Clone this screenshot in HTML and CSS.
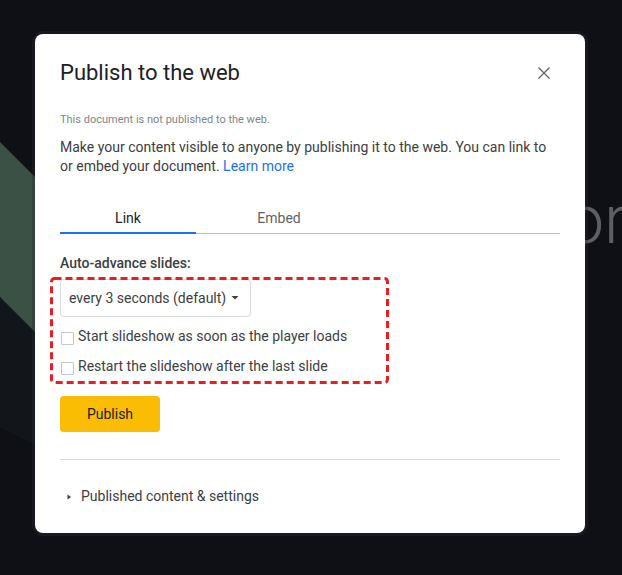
FILE: index.html
```html
<!DOCTYPE html>
<html lang="en">
<head>
<meta charset="utf-8">
<title>Publish to the web</title>
<link rel="stylesheet" href="styles.css">
</head>
<body>
<div class="backdrop">
  <div class="deco-green"></div>
  <div class="deco-dark"></div>
  <div class="deco-text">or</div>
  <div class="dialog">
    <div class="header">
      <h1 class="title">Publish to the web</h1>
      <svg class="close" width="24" height="24" viewBox="0 0 24 24" aria-label="Close">
        <path d="M6.5 6.5 L17.5 17.5 M17.5 6.5 L6.5 17.5" stroke="#5f6368" stroke-width="1.3" fill="none"/>
      </svg>
    </div>
    <p class="status">This document is not published to the web.</p>
    <p class="desc">Make your content visible to anyone by publishing it to the web. You can link to or embed your document. <a class="link" href="#">Learn more</a></p>
    <div class="tabs">
      <div class="tab tab-active">Link</div>
      <div class="tab tab-embed">Embed</div>
    </div>
    <div class="label">Auto-advance slides:</div>
    <div class="select">
      <span>every 3 seconds (default)</span>
      <svg class="caret" width="8" height="4" viewBox="0 0 8 4"><path d="M0.5 0 L7.5 0 L4 3.6 Z" fill="#3c4043"/></svg>
    </div>
    <label class="check"><span class="box"></span><span>Start slideshow as soon as the player loads</span></label>
    <label class="check check-second"><span class="box"></span><span>Restart the slideshow after the last slide</span></label>
    <button class="publish">Publish</button>
    <div class="divider"></div>
    <div class="expander">
      <svg class="tri" width="5" height="6" viewBox="0 0 5 6"><path d="M0.5 0.5 L4 3 L0.5 5.5 Z" fill="#3c4043"/></svg>
      <span>Published content &amp; settings</span>
    </div>
    <svg class="annot" width="339" height="107" viewBox="0 0 339 107">
      <rect x="1.5" y="1.5" width="336" height="104" rx="3" ry="3" fill="none" stroke="#ec1c24" stroke-width="3" stroke-dasharray="7 4"/>
    </svg>
  </div>
</div>
</body>
</html>
```

FILE: styles.css
```css
* { box-sizing: border-box; }
html, body {
  margin: 0;
  padding: 0;
  width: 622px;
  height: 575px;
  overflow: hidden;
  background: #0e1015;
  font-family: Roboto, "Liberation Sans", Arial, sans-serif;
}
.backdrop {
  position: relative;
  width: 622px;
  height: 575px;
  padding: 34px 0 0 35px;
}
.deco-green {
  position: absolute;
  left: 0;
  top: 140px;
  width: 60px;
  height: 240px;
  background: #3b5145;
  clip-path: polygon(0 2px, 60px 62px, 60px 240px, 0 157px);
}
.deco-dark {
  position: absolute;
  left: 0;
  top: 297px;
  width: 60px;
  height: 160px;
  background: #121519;
  clip-path: polygon(0 0, 60px 60px, 60px 160px, 0 130px);
}
.deco-text {
  position: absolute;
  left: 566px;
  top: 186px;
  font-size: 68px;
  line-height: 68px;
  font-weight: 300;
  color: #5d5f62;
}
.dialog {
  position: relative;
  width: 550px;
  height: 499px;
  background: #ffffff;
  border-radius: 8px;
  padding: 25px 25px 0 25px;
  box-shadow: 0 0 0 3px rgba(40, 44, 52, 0.35);
}
.header {
  display: flex;
  align-items: center;
  justify-content: space-between;
}
.title {
  margin: 0;
  font-size: 22px;
  line-height: 28px;
  font-weight: 400;
  color: #202124;
}
.close {
  margin-right: 4px;
  display: block;
}
.status {
  margin: 25px 0 0 0;
  font-size: 11px;
  line-height: 16px;
  color: #80868b;
}
.desc {
  margin: 10px 0 0 0;
  font-size: 14px;
  line-height: 19px;
  color: #3c4043;
}
.link {
  color: #1a73e8;
  text-decoration: none;
}
.tabs {
  display: flex;
  margin-top: 24px;
  border-bottom: 1px solid #bdc1c6;
}
.tab {
  font-size: 14px;
  line-height: 20px;
  padding: 8px 0 4px 0;
  text-align: center;
  color: #5f6368;
  border-bottom: 2px solid transparent;
  margin-bottom: -1px;
}
.tab-active {
  width: 136px;
  color: #202124;
  border-bottom-color: #1a73e8;
}
.tab-embed {
  width: 166px;
}
.label {
  margin-top: 19px;
  font-size: 14px;
  line-height: 20px;
  font-weight: 500;
  color: #3c4043;
}
.select {
  margin-top: 6px;
  width: 191px;
  height: 38px;
  border: 1px solid #dadce0;
  border-radius: 4px;
  display: flex;
  align-items: center;
  justify-content: space-between;
  padding: 0 11px 0 8px;
  font-size: 14px;
  line-height: 20px;
  color: #3c4043;
}
.caret { display: block; }
.check {
  display: flex;
  align-items: flex-start;
  margin-top: 9px;
  font-size: 14px;
  line-height: 20px;
  color: #3c4043;
}
.check-second { margin-top: 10px; }
.box {
  width: 13px;
  height: 13px;
  margin: 6px 4px 0 1px;
  border: 1px solid #c4c7c9;
  border-radius: 1px;
  flex: none;
}
.publish {
  display: block;
  margin-top: 20px;
  width: 100px;
  height: 36px;
  border: none;
  border-radius: 4px;
  background: #fbbc04;
  color: #202124;
  font-family: inherit;
  font-size: 14px;
  font-weight: 400;
  padding: 0;
}
.divider {
  margin-top: 27px;
  height: 1px;
  background: #dadce0;
}
.expander {
  margin-top: 26px;
  display: flex;
  align-items: center;
  padding-left: 7px;
  font-size: 14px;
  line-height: 20px;
  color: #3c4043;
}
.tri {
  display: block;
  margin-right: 9px;
  margin-top: 1px;
}
.annot {
  position: absolute;
  left: 15px;
  top: 243px;
  pointer-events: none;
}
```
